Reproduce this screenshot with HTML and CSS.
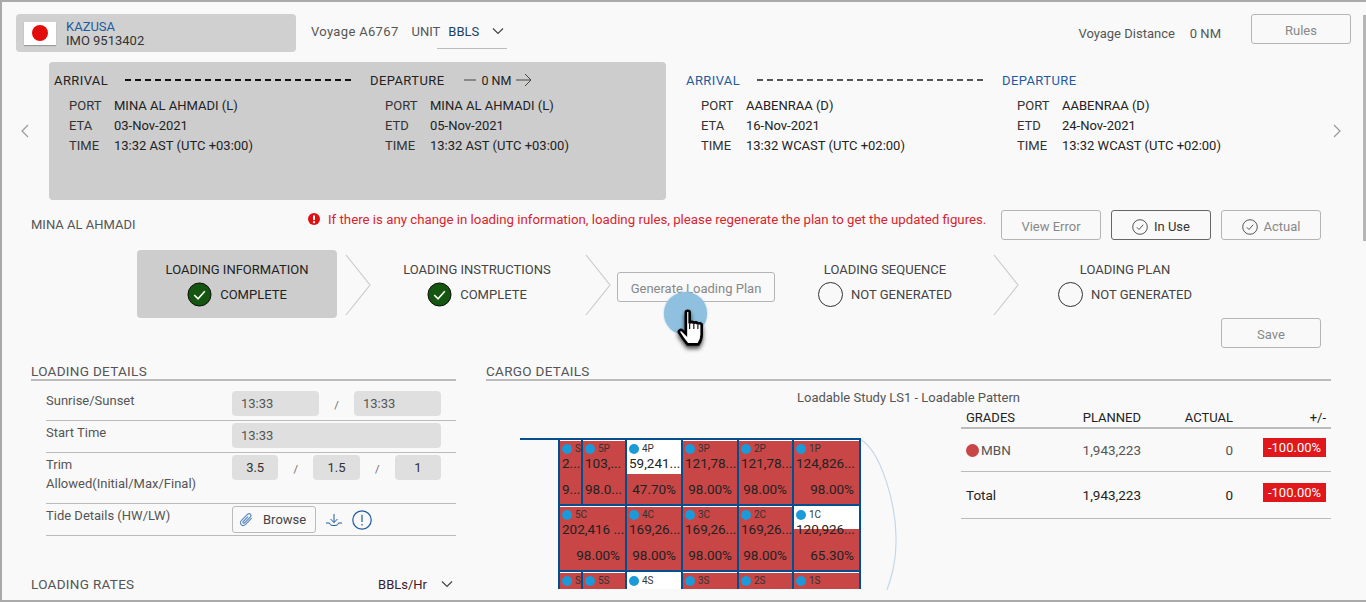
FILE: index.html
```html
<!DOCTYPE html>
<html lang="en">
<head>
    <meta charset="UTF-8">
    <meta name="viewport" content="width=device-width, initial-scale=1.0">
    <title>Loading Plan</title>
    <link rel="stylesheet" href="styles.css">
</head>
<body>
<div class="page">
    <div class="scroll-thumb"></div>

    <div class="top-bar">
        <div class="vessel">
            <div class="flag"><span class="flag-sun"></span></div>
            <div class="vessel-text">
                <div class="vessel-name">KAZUSA</div>
                <div class="vessel-imo">IMO 9513402</div>
            </div>
        </div>
        <span class="voyage">Voyage A6767</span>
        <span class="unit-label">UNIT</span>
        <div class="unit-select">
            <span>BBLS</span>
            <svg class="chev" viewBox="0 0 12 8"><path d="M1 1.5l5 5 5-5"/></svg>
        </div>
        <span class="distance">Voyage Distance</span>
        <span class="distance-val">0 NM</span>
        <button class="btn btn-rules">Rules</button>
    </div>

    <div class="voyage-strip">
        <div class="nav"><svg viewBox="0 0 10 16"><path d="M8 2L2 8l6 6"/></svg></div>
        <div class="port-card">
            <div class="stop">
                <div class="stop-head"><span class="w-arrival">ARRIVAL</span><span class="dash"></span></div>
                <div class="stop-row"><span class="lbl">PORT</span><span>MINA AL AHMADI (L)</span></div>
                <div class="stop-row"><span class="lbl">ETA</span><span>03-Nov-2021</span></div>
                <div class="stop-row"><span class="lbl">TIME</span><span>13:32 AST (UTC +03:00)</span></div>
            </div>
            <div class="stop">
                <div class="stop-head">
                    <span>DEPARTURE</span>
                    <span class="leg">
                        <svg class="leg-line" viewBox="0 0 12 2"><path d="M0 1h12"/></svg>
                        0 NM
                        <svg class="leg-arrow" viewBox="0 0 16 14"><path d="M0 7h15M9 1l6 6-6 6"/></svg>
                    </span>
                </div>
                <div class="stop-row"><span class="lbl">PORT</span><span>MINA AL AHMADI (L)</span></div>
                <div class="stop-row"><span class="lbl">ETD</span><span>05-Nov-2021</span></div>
                <div class="stop-row"><span class="lbl">TIME</span><span>13:32 AST (UTC +03:00)</span></div>
            </div>
        </div>
        <div class="port-next">
            <div class="stop">
                <div class="stop-head blue"><span class="w-arrival">ARRIVAL</span><span class="dash dash-soft"></span></div>
                <div class="stop-row"><span class="lbl">PORT</span><span>AABENRAA (D)</span></div>
                <div class="stop-row"><span class="lbl">ETA</span><span>16-Nov-2021</span></div>
                <div class="stop-row"><span class="lbl">TIME</span><span>13:32 WCAST (UTC +02:00)</span></div>
            </div>
            <div class="stop">
                <div class="stop-head blue"><span>DEPARTURE</span></div>
                <div class="stop-row"><span class="lbl">PORT</span><span>AABENRAA (D)</span></div>
                <div class="stop-row"><span class="lbl">ETD</span><span>24-Nov-2021</span></div>
                <div class="stop-row"><span class="lbl">TIME</span><span>13:32 WCAST (UTC +02:00)</span></div>
            </div>
        </div>
        <div class="nav nav-right"><svg viewBox="0 0 10 16"><path d="M2 2l6 6-6 6"/></svg></div>
    </div>

    <div class="notice-row">
        <span class="port-title">MINA AL AHMADI</span>
        <span class="notice">
            <svg class="notice-icon" viewBox="0 0 12 12"><circle cx="6" cy="6" r="6"/><rect x="5" y="2.2" width="2" height="5" rx="1" fill="#fff"/><circle cx="6" cy="9.2" r="1.1" fill="#fff"/></svg>
            If there is any change in loading information, loading rules, please regenerate the plan to get the updated figures.
        </span>
        <button class="btn">View Error</button>
        <button class="btn btn-dark"><svg class="tick" viewBox="0 0 16 16"><circle cx="8" cy="8" r="7.3"/><path d="M4.8 8.3l2.2 2.2 4.2-4.8"/></svg>In Use</button>
        <button class="btn"><svg class="tick" viewBox="0 0 16 16"><circle cx="8" cy="8" r="7.3"/><path d="M4.8 8.3l2.2 2.2 4.2-4.8"/></svg>Actual</button>
    </div>

    <div class="stepper">
        <div class="step step-active">
            <div class="step-title">LOADING INFORMATION</div>
            <div class="step-status">
                <svg class="done" viewBox="0 0 26 26"><circle cx="13" cy="13" r="12" /><path d="M7.5 13.5l4 4 7-8"/></svg>
                COMPLETE
            </div>
        </div>
        <svg class="arrow" viewBox="0 0 26 62"><path d="M1 1l24 30L1 61"/></svg>
        <div class="step">
            <div class="step-title">LOADING INSTRUCTIONS</div>
            <div class="step-status">
                <svg class="done" viewBox="0 0 26 26"><circle cx="13" cy="13" r="12" /><path d="M7.5 13.5l4 4 7-8"/></svg>
                COMPLETE
            </div>
        </div>
        <svg class="arrow" viewBox="0 0 26 62"><path d="M1 1l24 30L1 61"/></svg>
        <button class="btn btn-generate">Generate Loading Plan</button>
        <div class="step step-gap">
            <div class="step-title">LOADING SEQUENCE</div>
            <div class="step-status"><span class="pending"></span>NOT GENERATED</div>
        </div>
        <svg class="arrow" viewBox="0 0 26 62"><path d="M1 1l24 30L1 61"/></svg>
        <div class="step">
            <div class="step-title">LOADING PLAN</div>
            <div class="step-status"><span class="pending"></span>NOT GENERATED</div>
        </div>
    </div>

    <div class="save-row"><button class="btn">Save</button></div>

    <div class="lower">
        <div class="left-col">
            <div class="sec-head">LOADING DETAILS</div>
            <div class="form-row form-row-first">
                <span class="form-label">Sunrise/Sunset</span>
                <div class="fields">
                    <span class="field">13:33</span><span class="slash">/</span><span class="field">13:33</span>
                </div>
            </div>
            <div class="form-row">
                <span class="form-label">Start Time</span>
                <div class="fields"><span class="field">13:33</span></div>
            </div>
            <div class="form-row form-row-tall">
                <span class="form-label">Trim<br>Allowed(Initial/Max/Final)</span>
                <div class="fields">
                    <span class="field field-num">3.5</span><span class="slash">/</span><span class="field field-num">1.5</span><span class="slash">/</span><span class="field field-num">1</span>
                </div>
            </div>
            <div class="form-row">
                <span class="form-label">Tide Details (HW/LW)</span>
                <div class="fields fields-tide">
                    <span class="browse">
                        <svg class="clip" viewBox="0 0 16 16"><path d="M13.6 6.2l-6 6.2c-1.3 1.3-3.3 1.4-4.4.3s-1-3 .3-4.3l5.9-6c.9-.9 2.2-1 3-.2s.7 2-.2 2.9l-5.6 5.7c-.4.4-1 .5-1.4.1s-.3-1 .1-1.4l4.8-4.9"/></svg>
                        Browse
                    </span>
                    <svg class="dl" viewBox="0 0 16 12"><path d="M8 0v8.500M4.500 5L8 8.500 11.500 5M0 9h3.500c.3 1.800 1.500 2.500 4.500 2.500s4.200-.7 4.500-2.500H16"/></svg>
                    <svg class="info" viewBox="0 0 20 20"><circle cx="10" cy="10" r="9.200"/><path d="M10 4.800v7.200M10 14v1.500"/></svg>
                </div>
            </div>
            <div class="rates-head">
                <span class="rates-title">LOADING RATES</span>
                <span class="rates-unit">BBLs/Hr<svg class="chev" viewBox="0 0 12 8"><path d="M1 1.500l5 5 5-5"/></svg></span>
            </div>
        </div>

        <div class="right-col">
            <div class="sec-head">CARGO DETAILS</div>
            <div class="study-title">Loadable Study LS1 - Loadable Pattern</div>
            <div class="cargo-body">
                <div class="ship">
                    <div class="ship-deck"></div>
                    <svg class="hull" viewBox="0 0 40 152"><path d="M0 1C20 12 37 65 36 105C36 125 31 140 27 152"/></svg>
                    <div class="tanks">
                        <div class="tank"><div class="tank-id"><i></i>S</div><div class="tank-val">2...</div><div class="tank-pct">9...</div></div>
                        <div class="tank"><div class="tank-id"><i></i>5P</div><div class="tank-val">103,...</div><div class="tank-pct">98.0...</div></div>
                        <div class="tank" style="--empty:33px"><div class="tank-id"><i></i>4P</div><div class="tank-val">59,241...</div><div class="tank-pct">47.70%</div></div>
                        <div class="tank"><div class="tank-id"><i></i>3P</div><div class="tank-val">121,78...</div><div class="tank-pct">98.00%</div></div>
                        <div class="tank"><div class="tank-id"><i></i>2P</div><div class="tank-val">121,78...</div><div class="tank-pct">98.00%</div></div>
                        <div class="tank"><div class="tank-id"><i></i>1P</div><div class="tank-val">124,826...</div><div class="tank-pct">98.00%</div></div>

                        <div class="tank tank-wide"><div class="tank-id"><i></i>5C</div><div class="tank-val">202,416 ...</div><div class="tank-pct">98.00%</div></div>
                        <div class="tank"><div class="tank-id"><i></i>4C</div><div class="tank-val">169,26...</div><div class="tank-pct">98.00%</div></div>
                        <div class="tank"><div class="tank-id"><i></i>3C</div><div class="tank-val">169,26...</div><div class="tank-pct">98.00%</div></div>
                        <div class="tank"><div class="tank-id"><i></i>2C</div><div class="tank-val">169,26...</div><div class="tank-pct">98.00%</div></div>
                        <div class="tank" style="--empty:22px"><div class="tank-id"><i></i>1C</div><div class="tank-val">120,926...</div><div class="tank-pct">65.30%</div></div>

                        <div class="tank"><div class="tank-id"><i></i>S</div></div>
                        <div class="tank"><div class="tank-id"><i></i>5S</div></div>
                        <div class="tank" style="--empty:33px"><div class="tank-id"><i></i>4S</div></div>
                        <div class="tank"><div class="tank-id"><i></i>3S</div></div>
                        <div class="tank"><div class="tank-id"><i></i>2S</div></div>
                        <div class="tank"><div class="tank-id"><i></i>1S</div></div>
                    </div>
                </div>
                <div class="grades">
                    <div class="g-row g-head"><span>GRADES</span><span>PLANNED</span><span>ACTUAL</span><span>+/-</span></div>
                    <div class="g-row g-mbn"><span class="g-name"><i class="g-dot"></i>MBN</span><span>1,943,223</span><span>0</span><span class="g-diff">-100.00%</span></div>
                    <div class="g-row g-total"><span>Total</span><span>1,943,223</span><span>0</span><span class="g-diff">-100.00%</span></div>
                </div>
            </div>
        </div>
    </div>

    <!-- pointer from the recording -->
    <div class="halo"></div>
    <svg class="hand" viewBox="0 0 32 38">
        <path d="M9 3.500c0-1.600 3.500-1.600 3.500 0V14c.3-2 3.600-2 3.800.200.300-1.800 3.500-1.600 3.700.500.400-1.500 3.500-1.200 3.500 1V24c0 4-1.500 7-3 9H10.500C8 30 5.500 26.500 3 22.500c-1.200-2 1.200-3.600 3-2l3 3z"/>
        <path class="hand-crease" d="M12.500 14v5M16.300 14.500V19M20 15v4"/>
    </svg>
</div>
</body>
</html>
```

FILE: styles.css
```css
* {
    box-sizing: border-box;
}

body {
    margin: 0;
    font-family: Roboto, "Liberation Sans", sans-serif;
    font-size: 13px;
    color: #333;
}

.page {
    position: relative;
    width: 1366px;
    height: 602px;
    overflow: hidden;
    background: #f9f9f9;
    border-top: 2px solid #aaa;
    border-bottom: 2px solid #aaa;
    border-left: 2px solid #aaa;
}

.scroll-thumb {
    position: absolute;
    right: 0;
    top: 13px;
    width: 3px;
    height: 226px;
    background: #b5b5b5;
}

button {
    font-family: inherit;
}

.btn {
    display: inline-flex;
    align-items: center;
    justify-content: center;
    flex: none;
    gap: 6px;
    width: 100px;
    height: 30px;
    padding: 3px 0 0;
    font-size: 13px;
    color: #888;
    background: transparent;
    border: 1px solid #b5b5b5;
    border-radius: 3px;
}

.btn-dark {
    color: #333;
    border-color: #666;
}

/* top bar */
.top-bar {
    display: flex;
    align-items: center;
    height: 38px;
    margin: 12px 0 0 14px;
    padding-right: 15px;
}

.vessel {
    display: flex;
    align-items: center;
    width: 280px;
    height: 38px;
    padding-left: 8px;
    background: #d0d0d0;
    border-radius: 4px;
}

.flag {
    display: flex;
    align-items: center;
    justify-content: center;
    width: 32px;
    height: 23px;
    margin-right: 10px;
    background: #fff;
    box-shadow: 0 1px 1px #999;
}

.flag-sun {
    width: 16px;
    height: 16px;
    border-radius: 50%;
    background: #e20c0c;
}

.vessel-text {
    padding-top: 2px;
    line-height: 14px;
}

.vessel-name {
    color: #1d5c9e;
}

.vessel-imo {
    color: #333;
}

.voyage {
    margin: 0 0 4px 15px;
    letter-spacing: .33px;
    color: #555;
}

.unit-label {
    margin: 0 0 4px 13px;
    color: #555;
}

.unit-select {
    display: flex;
    align-items: center;
    justify-content: space-between;
    width: 70px;
    height: 35px;
    margin-left: -3px;
    padding: 0 3px 0 11px;
    color: #1c3f66;
    border-bottom: 1px solid #bbb;
    align-self: flex-start;
}

.chev {
    width: 12px;
    height: 8px;
    fill: none;
    stroke: #444;
    stroke-width: 1.2;
}

.distance {
    margin-left: auto;
    color: #555;
}

.distance-val {
    margin-left: 15px;
    color: #555;
}

.btn-rules {
    margin-left: 30px;
    align-self: flex-start;
}

/* voyage strip */
.voyage-strip {
    display: flex;
    height: 138px;
    margin-top: 10px;
}

.nav {
    display: flex;
    align-items: center;
    justify-content: flex-end;
    width: 47px;
    padding: 0 19px 0 0;
}

.nav svg {
    width: 10px;
    height: 16px;
    fill: none;
    stroke: #999;
    stroke-width: 1.2;
}

.nav-right {
    width: auto;
    padding: 0 0 0 14px;
}

.port-card {
    display: flex;
    flex: none;
    width: 617px;
    padding: 8px 0 0 5px;
    background: #cdcdcd;
    border-radius: 4px;
}

.port-next {
    display: flex;
    flex: none;
    margin-left: 20px;
    padding-top: 8px;
}

.stop {
    flex: none;
    width: 316px;
}

.stop-head {
    display: flex;
    align-items: center;
    height: 20px;
    margin-bottom: 6px;
    color: #222;
    letter-spacing: .4px;
}

.stop-head.blue {
    color: #1d5c9e;
}

.w-arrival {
    width: 71px;
}

.dash {
    width: 226px;
    border-top: 2px dashed #111;
}

.dash-soft {
    border-top-color: #555;
}

.leg {
    display: inline-flex;
    align-items: center;
    margin-left: 20px;
    gap: 5px;
    font-size: 12.5px;
    letter-spacing: 0;
    white-space: nowrap;
}

.leg-line {
    width: 12px;
    height: 2px;
    stroke: #444;
    stroke-width: 1;
}

.leg-arrow {
    width: 16px;
    height: 14px;
    fill: none;
    stroke: #444;
    stroke-width: 1;
}

.stop-row {
    display: flex;
    height: 20px;
    line-height: 20px;
    padding-left: 15px;
    color: #222;
}

.lbl {
    width: 45px;
    color: #333;
}

/* notice + actions */
.notice-row {
    display: flex;
    align-items: flex-start;
    height: 30px;
    margin-top: 10px;
    padding-left: 29px;
}

.port-title {
    width: 277px;
    margin-top: 7px;
    color: #555;
}

.notice {
    display: flex;
    align-items: center;
    gap: 8px;
    width: 693px;
    height: 18px;
    font-size: 13.25px;
    white-space: nowrap;
    color: #d9232e;
}

.notice-icon {
    width: 12px;
    height: 12px;
    fill: #e01010;
    flex: none;
}

.notice-row .btn {
    margin-right: 10px;
}

.tick {
    width: 16px;
    height: 16px;
    fill: none;
    stroke: #555;
    stroke-width: 1;
}

/* stepper */
.stepper {
    display: flex;
    align-items: flex-start;
    height: 68px;
    margin: 10px 0 0 135px;
}

.step {
    width: 200px;
    height: 68px;
    padding-top: 12px;
    text-align: center;
    color: #444;
}

.step-active {
    color: #222;
    background: #cdcdcd;
    border-radius: 4px;
}

.step-gap {
    margin-left: 10px;
}

.step-title {
    height: 16px;
    line-height: 16px;
}

.step-status {
    display: flex;
    align-items: center;
    justify-content: center;
    gap: 8px;
    height: 26px;
    margin-top: 3px;
}

.done {
    width: 25px;
    height: 25px;
}

.done circle {
    fill: #14560f;
    stroke: #0d0d0d;
    stroke-width: 1;
}

.done path {
    fill: none;
    stroke: #fff;
    stroke-width: 1.6;
}

.pending {
    width: 25px;
    height: 25px;
    border: 1px solid #333;
    border-radius: 50%;
}

.arrow {
    flex: none;
    width: 26px;
    height: 62px;
    margin: 4px 6px 0 8px;
    fill: none;
    stroke: #ccc;
    stroke-width: 1.2;
}

.btn-generate {
    width: 158px;
    margin-top: 22px;
}

.save-row {
    display: flex;
    justify-content: flex-end;
    height: 30px;
    padding-right: 45px;
}

/* lower half */
.lower {
    display: flex;
    margin: 15px 0 0 29px;
}

.left-col {
    flex: none;
    width: 425px;
}

.right-col {
    flex: none;
    width: 845px;
    margin-left: 30px;
}

.sec-head {
    height: 18px;
    line-height: 16px;
    font-size: 13.5px;
    letter-spacing: .3px;
    color: #555;
    border-bottom: 2px solid #bbb;
}

.form-row {
    display: flex;
    height: 32px;
    margin-left: 15px;
    padding-top: 2px;
    border-bottom: 1px solid #bbb;
}

.form-row-first {
    height: 40px;
    padding-top: 10px;
}

.form-row-tall {
    height: 51px;
}

.form-label {
    width: 186px;
    line-height: 19px;
    color: #555;
}

.fields {
    display: flex;
    align-items: flex-start;
    width: 209px;
}

.field {
    flex: 1;
    height: 25px;
    line-height: 25px;
    padding-left: 9px;
    color: #555;
    background: #dfdfdf;
    border-radius: 4px;
}

.field-num {
    padding: 0;
    text-align: center;
    color: #333;
}

.slash {
    width: 35px;
    line-height: 29px;
    text-align: center;
    font-size: 11px;
    color: #666;
}

.fields-tide {
    align-items: center;
    height: 27px;
}

.browse {
    display: flex;
    align-items: center;
    gap: 9px;
    flex: none;
    width: 84px;
    height: 27px;
    padding-left: 5px;
    color: #444;
    border: 1px solid #bbb;
    border-radius: 3px;
}

.clip {
    width: 16px;
    height: 16px;
    fill: none;
    stroke: #5d8cc0;
    stroke-width: 1.2;
}

.dl {
    flex: none;
    width: 16px;
    height: 12px;
    margin-left: 10px;
    fill: none;
    stroke: #1d5c9e;
    stroke-width: 1;
}

.info {
    flex: none;
    width: 20px;
    height: 20px;
    margin-left: 10px;
    fill: none;
    stroke: #1d5c9e;
    stroke-width: 1.2;
}

.rates-head {
    display: flex;
    justify-content: space-between;
    margin-top: 40px;
    color: #555;
}

.rates-title {
    font-size: 13.5px;
    letter-spacing: .3px;
}

.rates-unit {
    display: flex;
    align-items: center;
    gap: 14px;
    padding-right: 3px;
    color: #3a1a30;
}

.study-title {
    height: 18px;
    margin-top: 9px;
    text-align: center;
    color: #555;
}

.cargo-body {
    display: flex;
}

.ship {
    position: relative;
    flex: none;
    width: 475px;
    height: 181px;
}

.ship-deck {
    position: absolute;
    left: 34px;
    top: 30px;
    width: 40px;
    height: 2px;
    background: #00508f;
}

.hull {
    position: absolute;
    left: 374px;
    top: 30px;
    width: 40px;
    height: 152px;
    fill: none;
    stroke: #c5d8ea;
    stroke-width: 1.2;
}

.tanks {
    position: absolute;
    left: 72px;
    top: 30px;
    display: grid;
    grid-template-columns: 23px 44px 56px 56px 55px 67px;
    grid-auto-rows: 66px;
    width: 303px;
    height: 151px;
    overflow: hidden;
    background: #00508f;
    padding: 2px 2px 0 0;
    color: #222;
    font-size: 13.5px;
}

.tank {
    --empty: 0px;
    display: flex;
    flex-direction: column;
    min-width: 0;
    margin-left: 2px;
    margin-bottom: 2px;
    padding: 1px 0 0 2px;
    border-top: 1px solid #fff;
    overflow: hidden;
    white-space: nowrap;
    background: linear-gradient(#fff var(--empty), #c84646 var(--empty));
}

.tank-wide {
    grid-column: span 2;
}

.tank-id {
    display: flex;
    align-items: center;
    gap: 3px;
    height: 13px;
    font-size: 10px;
    color: #333;
}

.tank-id i {
    flex: none;
    width: 10px;
    height: 10px;
    border-radius: 50%;
    background: #1a9ad8;
}

.tank-val {
    line-height: 16px;
}

.tank-pct {
    margin-top: 10px;
    padding-right: 5px;
    line-height: 16px;
    text-align: right;
}

.grades {
    flex: none;
    width: 370px;
}

.g-row {
    display: grid;
    grid-template-columns: 100px 75px 92px 93px;
    padding: 0 5px;
    align-items: center;
    border-bottom: 1px solid #bbb;
}

.g-row span:not(:first-child) {
    text-align: right;
}

.g-head {
    height: 21px;
    color: #222;
    border-bottom-width: 2px;
}

.g-mbn {
    height: 43px;
    font-size: 13.5px;
    color: #555;
}

.g-total {
    height: 47px;
    font-size: 13.5px;
    color: #222;
}

.g-name {
    display: flex;
    align-items: center;
    gap: 2px;
}

.g-dot {
    width: 13px;
    height: 13px;
    border-radius: 50%;
    background: #c84646;
}

.g-row span.g-diff {
    justify-self: end;
    width: 63px;
    height: 19px;
    line-height: 19px;
    margin-bottom: 6px;
    font-size: 13px;
    text-align: center;
    color: #fff;
    background: #e0181c;
}

/* recorded pointer */
.halo {
    position: absolute;
    left: 662px;
    top: 290px;
    width: 43px;
    height: 43px;
    border-radius: 50%;
    background: #8fc0e0;
    box-shadow: 0 0 2px #8fc0e0;
}

.hand {
    position: absolute;
    left: 674px;
    top: 306px;
    width: 35px;
    height: 42px;
    fill: #fff;
    stroke: #000;
    stroke-width: 2.4;
    filter: drop-shadow(0 3px 2px rgba(0, 0, 0, .7));
}

.hand-crease {
    fill: none;
    stroke-width: 1;
}
```
